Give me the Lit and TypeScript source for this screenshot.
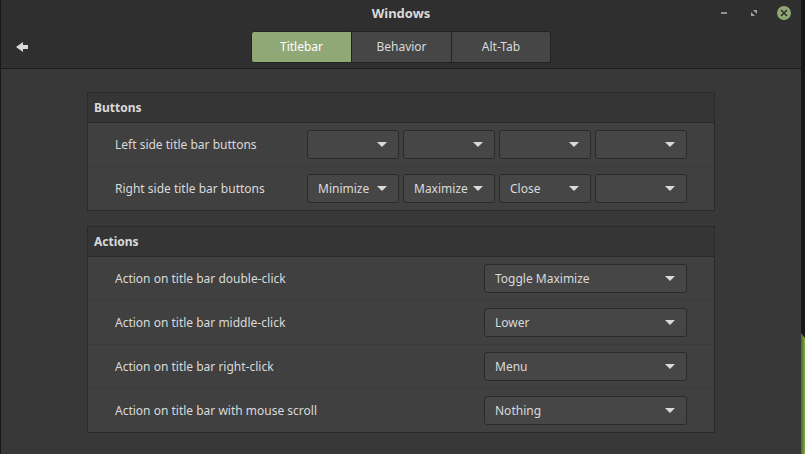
import { LitElement, html, css } from "lit";
import { customElement, property, state } from "lit/decorators.js";
import { classMap } from "lit/directives/class-map.js";

const BUTTON_OPTIONS = ["", "Menu", "Minimize", "Maximize", "Close"];
const ACTION_OPTIONS = ["Toggle Maximize", "Lower", "Menu", "Nothing"];
const TABS = ["Titlebar", "Behavior", "Alt-Tab"];

const BUTTON_ROWS = [
  { label: "Left side title bar buttons", values: ["", "", "", ""] },
  { label: "Right side title bar buttons", values: ["Minimize", "Maximize", "Close", ""] },
];

const ACTION_ROWS = [
  { label: "Action on title bar double-click", value: "Toggle Maximize" },
  { label: "Action on title bar middle-click", value: "Lower" },
  { label: "Action on title bar right-click", value: "Menu" },
  { label: "Action on title bar with mouse scroll", value: "Nothing" },
];

@customElement("combo-box")
export class ComboBox extends LitElement {
  @property() value = "";
  @property() label = "";
  @property({ type: Array }) options: string[] = [];

  static styles = css`
    :host {
      display: block;
    }
    .combo {
      display: grid;
      align-items: center;
    }
    .field,
    .arrow {
      grid-area: 1 / 1;
    }
    .field {
      appearance: none;
      box-sizing: border-box;
      width: 100%;
      height: 29px;
      margin: 0;
      padding: 0 10px;
      border: 1px solid #2a2a2a;
      border-radius: 3px;
      background: #464646;
      color: #dadada;
      font: 12px/18px "Noto Sans", sans-serif;
    }
    .field option {
      background: #404040;
    }
    .arrow {
      justify-self: end;
      margin-right: 12px;
      pointer-events: none;
    }
  `;

  render() {
    return html`<div class="combo">
      <select class="field" aria-label=${this.label}>
        ${this.options.map(
          (o) => html`<option value=${o} ?selected=${o === this.value}>${o}</option>`
        )}
      </select>
      <svg class="arrow" width="10" height="5" viewBox="0 0 10 5" aria-hidden="true">
        <path d="M0 0H10L5 5Z" fill="#dadada" />
      </svg>
    </div>`;
  }
}

@customElement("app-root")
export class AppRoot extends LitElement {
  @state() private active = "Titlebar";

  static styles = css`
    :host {
      display: block;
      font: 12px/18px "Noto Sans", sans-serif;
      color: #dadada;
    }
    .desktop {
      display: grid;
      grid-template-columns: minmax(0, 1fr) 4px;
      min-height: 100vh;
      background: #171717;
    }
    .window {
      border-left: 1px solid #171717;
      background: #383838;
    }
    .wallpaper {
      display: flex;
      flex-direction: column;
      justify-content: flex-end;
    }
    .leaf {
      width: 100%;
      height: 121px;
    }
    .header {
      border-bottom: 1px solid #1c1c1c;
      background: #2f2f2f;
    }
    .bar {
      display: grid;
      grid-template-columns: 1fr auto 1fr;
      align-items: center;
    }
    .titlebar {
      height: 26px;
    }
    .toolbar {
      padding: 5px 0;
    }
    .title {
      grid-column: 2;
      margin: 0;
      font-size: 13px;
      line-height: 18px;
      font-weight: 700;
    }
    .controls {
      display: flex;
      justify-content: flex-end;
      gap: 14px;
      padding-right: 9px;
    }
    .control,
    .back {
      display: flex;
      align-items: center;
      justify-content: center;
      padding: 0;
      border: 0;
      background: none;
    }
    .control {
      width: 16px;
      height: 16px;
    }
    .back {
      width: 24px;
      height: 24px;
      margin-left: 9px;
    }
    .tabs {
      display: grid;
      grid-template-columns: 101px 100px 99px;
    }
    .tab {
      height: 32px;
      padding: 0;
      border: 1px solid #232323;
      border-left-width: 0;
      background: #464646;
      color: #dadada;
      font: inherit;
    }
    .tab:first-child {
      border-left-width: 1px;
      border-radius: 3px 0 0 3px;
    }
    .tab:last-child {
      border-radius: 0 3px 3px 0;
    }
    .tab.active {
      background: #8fa876;
      color: #ffffff;
    }
    .content {
      display: grid;
      gap: 15px;
      padding: 23px 86px 21px;
    }
    .panel {
      border: 1px solid #2a2a2a;
      background: #404040;
    }
    .heading {
      margin: 0;
      padding: 6px 6px 5px;
      border-bottom: 1px solid #2a2a2a;
      background: #353535;
      font-size: 12px;
      line-height: 18px;
      font-weight: 700;
    }
    .row {
      display: flex;
      align-items: center;
      justify-content: space-between;
      padding: 7px 27px;
    }
    .row + .row {
      border-top: 1px solid #3a3a3a;
    }
    .group {
      display: grid;
      grid-template-columns: repeat(4, 92px);
      gap: 4px;
    }
    .wide {
      width: 203px;
    }
  `;

  render() {
    return html`<div class="desktop">
      <main class="window">
        <header class="header">
          <div class="bar titlebar">
            <h1 class="title">Windows</h1>
            <div class="controls">
              <button class="control" aria-label="Minimize window">
                <svg width="6" height="2"><path d="M0 0H6V2H0Z" fill="#919191" /></svg>
              </button>
              <button class="control" aria-label="Maximize window">
                <svg width="6" height="6" viewBox="0 0 6 6">
                  <path d="M2 0H6V4ZM0 2L4 6H0Z" fill="#a0a0a0" />
                </svg>
              </button>
              <button class="control" aria-label="Close window">
                <svg width="14" height="14" viewBox="0 0 14 14">
                  <circle cx="7" cy="7" r="7" fill="#8fa876" />
                  <path d="M4 4L10 10M10 4L4 10" stroke="#2f2f2f" stroke-width="1.6" />
                </svg>
              </button>
            </div>
          </div>
          <div class="bar toolbar">
            <button class="back" aria-label="Back">
              <svg width="12" height="10" viewBox="0 0 12 10">
                <path d="M0 5L7 0V3H12V7H7V10Z" fill="#dcd8d8" />
              </svg>
            </button>
            <nav class="tabs" aria-label="Window settings">
              ${TABS.map(
                (t) => html`<button
                  class=${classMap({ tab: true, active: t === this.active })}
                  aria-pressed=${t === this.active}
                  @click=${() => (this.active = t)}
                >${t}</button>`
              )}
            </nav>
          </div>
        </header>
        <div class="content">
          <section class="panel">
            <h2 class="heading">Buttons</h2>
            ${BUTTON_ROWS.map(
              (r) => html`<div class="row" role="group" aria-label=${r.label}>
                <span>${r.label}</span>
                <div class="group">
                  ${r.values.map(
                    (v, i) => html`<combo-box
                      .options=${BUTTON_OPTIONS}
                      .value=${v}
                      .label=${`${r.label} ${i + 1}`}
                    ></combo-box>`
                  )}
                </div>
              </div>`
            )}
          </section>
          <section class="panel">
            <h2 class="heading">Actions</h2>
            ${ACTION_ROWS.map(
              (r) => html`<div class="row">
                <span>${r.label}</span>
                <combo-box
                  class="wide"
                  .options=${ACTION_OPTIONS}
                  .value=${r.value}
                  .label=${r.label}
                ></combo-box>
              </div>`
            )}
          </section>
        </div>
      </main>
      <div class="wallpaper">
        <svg class="leaf" viewBox="0 0 4 121" preserveAspectRatio="none" aria-hidden="true">
          <defs>
            <linearGradient id="leaf-fill" x1="0" x2="1" y1="0" y2="0">
              <stop offset="0" stop-color="#4f6b2a" />
              <stop offset="1" stop-color="#7fa844" />
            </linearGradient>
          </defs>
          <path d="M0 0L4 5V121H0Z" fill="url(#leaf-fill)" />
        </svg>
      </div>
    </div>`;
  }
}
